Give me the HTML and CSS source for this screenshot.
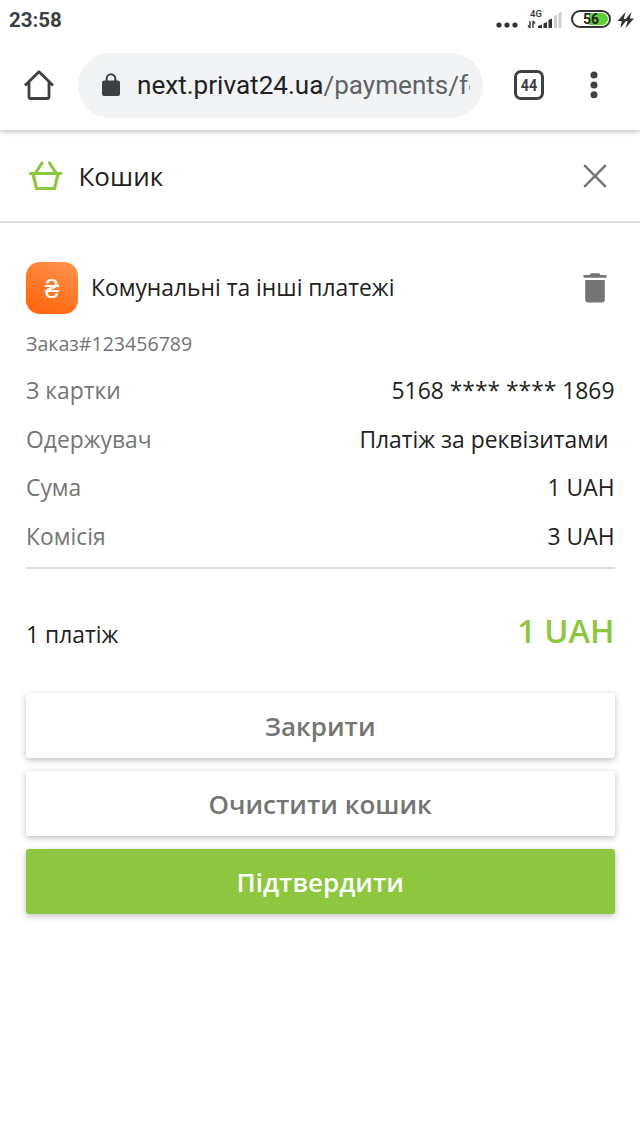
FILE: index.html
```html
<!DOCTYPE html>
<html lang="uk">
<head>
<meta charset="utf-8">
<meta name="viewport" content="width=device-width">
<title>Кошик</title>
<link rel="stylesheet" href="styles.css">
</head>
<body>
<header class="browser">
  <div class="status">
    <span class="time">23:58</span>
    <div class="indicators">
      <svg class="more" width="22" height="6" viewBox="0 0 22 6"><circle cx="3" cy="3" r="2.6"/><circle cx="11" cy="3" r="2.6"/><circle cx="19" cy="3" r="2.6"/></svg>
      <div class="network">
        <span class="generation">4G</span>
        <svg width="36" height="19" viewBox="0 0 36 19"><path d="M3 11v7M1 15.500l2 2.500M6 18v-7M8 13.500l-2-2.500" fill="none" stroke="#333" stroke-width="1.300"/><path d="M11 18v-2l4-1.500V18zM16.500 13.500l3.500-1.500v6h-3.500zM21.500 10L25 8.500V18h-3.500z" fill="#333"/><path d="M27 6l3-1.500V18h-3zM31.500 3l3-1.500V18h-3z" fill="#cfcfcf"/></svg>
      </div>
      <div class="battery"><span>56</span></div>
      <svg class="charge" width="17" height="18" viewBox="0 0 17 18"><path d="M8.500 1L0.500 10h4.200L3.500 17l7-9H6.800zM14.500 1L7 10h3.700L8.500 17 17 7.500h-4.200z" fill="#333"/></svg>
    </div>
  </div>
  <div class="toolbar">
    <svg class="home" width="32" height="32" viewBox="0 0 32 32" fill="none" stroke="#3c4043" stroke-width="2.800" stroke-linejoin="round"><path d="M2 16.500L16 2.800 30 16.500M6 13.500v14.300q0 1.700 1.700 1.700h16.600q1.700 0 1.700-1.700V13.500"/></svg>
    <div class="address">
      <svg width="18" height="24" viewBox="0 0 18 24"><path d="M4.700 9V5.500a4.300 4.300 0 0 1 8.600 0V9" fill="none" stroke="#3c4043" stroke-width="2"/><rect y="7.500" width="18" height="15.500" rx="2" fill="#3c4043"/></svg>
      <span class="url">next.privat24.ua<span class="path">/payments/fo</span></span>
    </div>
    <div class="tabs"><span>44</span></div>
    <svg class="menu" width="8" height="28" viewBox="0 0 8 28" fill="#3c4043"><circle cx="4" cy="4" r="3.500"/><circle cx="4" cy="14" r="3.500"/><circle cx="4" cy="23.700" r="3.500"/></svg>
  </div>
</header>
<main>
  <div class="heading">
    <svg width="34" height="30" viewBox="0 0 34 30" fill="none" stroke="#8dc63f" stroke-width="3.200"><path d="M.3 12.500h32.700M4 13l3.500 14.500h18L29 13"/><path d="M6.500 12L13 2M27 12L20.500 2" stroke-linecap="round"/></svg>
    <h1>Кошик</h1>
    <svg class="close" width="24" height="24" viewBox="0 0 24 24"><path d="M1.200 1.200l21.600 21.600M22.800 1.200L1.200 22.800" stroke="#757575" stroke-width="2.500"/></svg>
  </div>
  <section class="cart">
    <div class="payment">
      <span class="currency">₴</span>
      <h2>Комунальні та інші платежі</h2>
      <svg class="trash" width="24" height="30" viewBox="0 0 24 30" fill="#757575"><path d="M.5 2H6.500L8 .3h8L17.500 2h6v2.800H.5zM2.200 7h19.600v19.500q0 3-3 3H5.200q-3 0-3-3z"/></svg>
    </div>
    <p class="order">Заказ#123456789</p>
    <dl class="details">
      <div><dt>З картки</dt><dd>5168 **** **** 1869</dd></div>
      <div><dt>Одержувач</dt><dd class="recipient">Платіж за реквізитами</dd></div>
      <div><dt>Сума</dt><dd>1 UAH</dd></div>
      <div><dt>Комісія</dt><dd>3 UAH</dd></div>
    </dl>
    <div class="total"><span>1 платіж</span><strong>1 UAH</strong></div>
    <div class="actions">
      <button>Закрити</button>
      <button>Очистити кошик</button>
      <button class="confirm">Підтвердити</button>
    </div>
  </section>
</main>
</body>
</html>
```

FILE: styles.css
```css
* { box-sizing: border-box; }
body { margin: 0; min-height: 1137px; background: #fff; color: #212121; font-family: "Open Sans", sans-serif; font-size: 22.850px; }
h1, h2, p, dl, dd { margin: 0; font-weight: 400; }
svg { display: block; flex: none; }
.browser { height: 130px; background: #fff; box-shadow: 0 1px 6px rgba(0,0,0,.32); font-family: Roboto, sans-serif; }
.status { height: 40px; display: flex; justify-content: space-between; padding: 0 6px 0 9px; }
.time { font-size: 20.500px; line-height: 41px; font-weight: 700; color: #3c4043; }
.indicators { display: flex; height: 40px; }
.more { margin: 22px 9px 0 0; fill: #333; }
.network { position: relative; padding-top: 10px; width: 36px; margin-right: 8px; }
.generation { position: absolute; left: 3px; top: 8px; font-size: 9.500px; line-height: 11px; font-weight: 500; color: #333; }
.battery { width: 40px; height: 18px; margin: 10px 6px 0 0; border: 2px solid #333; border-radius: 9px; padding: 1px; }
.battery span { display: block; height: 12px; border-radius: 6px; background: linear-gradient(90deg, #fff 44%, #60cf35 44%); font-size: 14px; line-height: 12px; font-weight: 700; text-align: center; color: #222; }
.charge { margin-top: 11px; }
.toolbar { display: flex; align-items: center; height: 90px; padding-left: 23px; }
.address { display: flex; align-items: center; width: 405px; height: 65px; margin-left: 23px; padding: 0 13px 0 24px; border-radius: 33px; background: #f1f3f4; }
.url { margin-left: 17px; flex: 1; min-width: 0; overflow: hidden; white-space: nowrap; font-size: 26.100px; line-height: 34px; color: #202124; }
.path { color: #5f6368; }
.tabs { width: 30px; height: 30px; margin-left: 31px; border: 3px solid #3c4043; border-radius: 7px; font-size: 17px; line-height: 24px; font-weight: 700; text-align: center; color: #3c4043; }
.tabs span { display: block; transform: scaleX(.84); }
.menu { margin-left: 46px; }
.heading { display: flex; align-items: center; height: 93px; padding: 0 33px 0 29px; border-bottom: 2px solid #ddd; }
.heading h1 { margin-left: 15.500px; font-size: 26px; line-height: 36px; }
.close { margin-left: auto; }
.cart { padding: 39px 25.500px 0 26px; }
.payment { display: flex; align-items: center; height: 52px; }
.currency { width: 52px; height: 52px; border-radius: 14px; background: linear-gradient(205deg, #ff9550, #ff6810 85%); color: #fff; font-size: 26px; line-height: 52px; text-align: center; }
.payment h2 { margin-left: 13px; font-size: 22.850px; line-height: 32px; }
.trash { margin: 0 7.500px 0 auto; }
.order { margin-top: 16px; font-size: 19.600px; line-height: 28px; color: #757575; }
.details { margin-top: 9px; padding-bottom: 6px; border-bottom: 2px solid #ddd; }
.details div { display: flex; justify-content: space-between; line-height: 48.600px; }
.details dt { color: #757575; }
.details .recipient { padding-right: 6px; }
.total { display: flex; align-items: baseline; justify-content: space-between; height: 124px; padding-top: 40px; }
.total span { font-size: 22.850px; }
.total strong { font-size: 32.600px; font-weight: 600; line-height: 44px; color: #8dc63f; }
.actions { display: grid; gap: 13px; }
.actions button { height: 65px; border: 0; border-radius: 3px; padding: 0; background: #fff; color: #757575; font: 600 26px/36px "Open Sans", sans-serif; box-shadow: 0 2px 6px rgba(0,0,0,.26); }
.actions .confirm { background: #8dc63f; color: #fff; }
```
